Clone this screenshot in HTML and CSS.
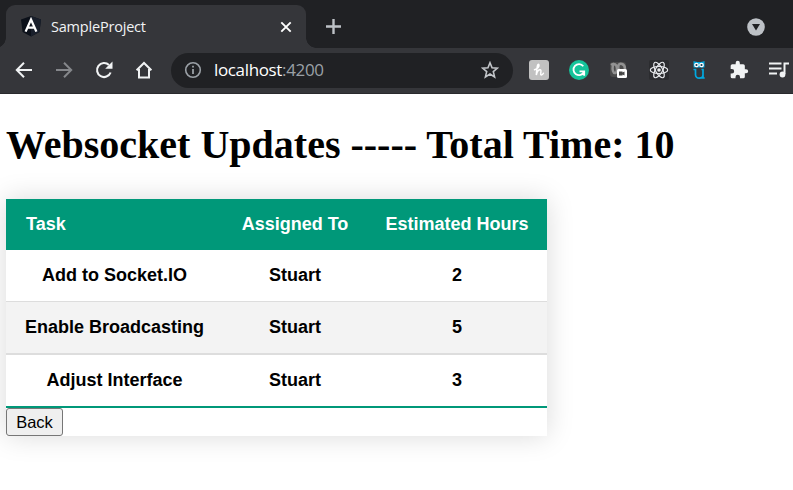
FILE: index.html
```html
<!DOCTYPE html>
<html lang="en">
<head>
<meta charset="utf-8">
<title>SampleProject</title>
<link rel="stylesheet" href="styles.css">
</head>
<body>
<header class="browser">
  <div class="tabs">
    <div class="tab">
      <svg class="logo" width="20" height="21" viewBox="0 0 20 21"><path fill="#0b1019" d="M10 0 20 3.4 18.4 16 10 20.6 1.6 16 0 3.4z"/><path fill="#191f2b" d="M10 0 20 3.4 18.4 16 10 20.6z"/><path fill="none" stroke="#fff" stroke-width="2.3" d="M4.6 15.6 10 3.5l5.4 12.1M7 11.6h6"/></svg>
      <span class="tab-title">SampleProject</span>
      <svg class="close" width="12" height="12" viewBox="0 0 12 12"><path stroke="#fff" stroke-width="1.9" d="m1.3 1.3 9.4 9.4m0-9.4-9.4 9.4"/></svg>
    </div>
    <svg class="plus" width="15" height="15" viewBox="0 0 15 15"><path stroke="#bdc1c6" stroke-width="2.4" d="M7.5 0v15M0 7.500h15"/></svg>
    <svg class="drop" width="18" height="18" viewBox="0 0 18 18"><circle cx="9" cy="9" r="8.8" fill="#bdc1c6"/><path fill="#202124" d="M5 6h8l-4 6.6z"/></svg>
  </div>
  <div class="toolbar">
    <svg class="nav" width="18" height="18" viewBox="0 0 18 18"><path fill="none" stroke="#f1f3f4" stroke-width="2" d="M17 9H2m7-7.2L1.8 9 9 16.2"/></svg>
    <svg class="nav" width="18" height="18" viewBox="0 0 18 18"><path fill="none" stroke="#85878b" stroke-width="2" d="M1 9h15M9 1.8 16.200 9 9 16.200"/></svg>
    <svg class="nav" width="18" height="18" viewBox="0 0 18 18"><path fill="none" stroke="#f1f3f4" stroke-width="2.100" d="M15.600 11.500A7 7 0 1 1 14 4.100"/><path fill="#f1f3f4" d="M17.500.5v7.300h-7.300z"/></svg>
    <svg class="nav" width="18" height="18" viewBox="0 0 18 18"><path fill="none" stroke="#f1f3f4" stroke-width="2" d="M1.600 9.300 9 2l7.400 7.300M4 8v8.500h10V8"/></svg>
    <div class="address">
      <svg width="18" height="18" viewBox="0 0 18 18"><circle cx="9" cy="9" r="7.300" fill="none" stroke="#9aa0a6" stroke-width="1.600"/><path stroke="#9aa0a6" stroke-width="1.800" d="M9 8v5M9 4.800v1.800"/></svg>
      <span class="url">localhost<span class="port">:4200</span></span>
      <svg class="star" width="18" height="18" viewBox="0 0 18 18"><path fill="none" stroke="#c2c5c9" stroke-width="1.600" d="m9 1.700 2.050 5 5.400.4-4.150 3.500 1.300 5.300L9 13l-4.600 2.900 1.300-5.300L1.550 7.100l5.400-.4z"/></svg>
    </div>
    <div class="extensions">
      <svg width="20" height="20" viewBox="0 0 20 20"><rect width="20" height="20" rx="3" fill="#c1c1c1"/><path fill="none" stroke="#fff" stroke-width="1.500" stroke-linecap="round" d="M5.500 9.800C8.500 9 10.800 6.300 9.800 4.500 8.800 3.300 7.800 7 7.300 15c.8-4 3-6 4.300-5.100 1.300 1-1 4.600.6 5 1 .1 1.800-.8 2.200-1.700"/></svg>
      <svg width="20" height="20" viewBox="0 0 20 20"><circle cx="10" cy="10" r="10" fill="#15c39a"/><path fill="none" stroke="#fff" stroke-width="1.800" d="M14.300 6.200A5.500 5.500 0 1 0 15 12M10.500 11.300h4.700v4.500"/></svg>
      <svg width="20" height="20" viewBox="0 0 20 20"><rect x="1" y="2" width="16" height="15" rx="3" fill="#4b4b4b"/><path fill="none" stroke="#929292" stroke-width="2.500" d="M2 5c3-2 6-1 6 4s-3 5-4 2 0-7 1-7M10 11C8 5 10 3 13 4s3 4 3 5"/><rect x="8" y="9" width="10" height="9" rx="1.500" fill="#fff"/><path fill="#444" d="M10 11.500h3.500v1l2-1v4l-2-1v1H10z"/></svg>
      <svg width="20" height="20" viewBox="0 0 20 20"><rect width="20" height="20" rx="2" fill="#2b2c2f"/><g fill="none" stroke="#e8eaed" stroke-width="1.200"><ellipse cx="10" cy="10" rx="8.700" ry="3.500"/><ellipse cx="10" cy="10" rx="8.700" ry="3.500" transform="rotate(60 10 10)"/><ellipse cx="10" cy="10" rx="8.700" ry="3.500" transform="rotate(120 10 10)"/></g><circle cx="10" cy="10" r="1.800" fill="#e8eaed"/></svg>
      <svg width="20" height="20" viewBox="0 0 20 20"><path fill="#00a8df" d="M4.500 1c2 .9 3.300.9 5.500.9s3.500 0 5.500-.9v6.500h-11z"/><g fill="#153b51" stroke="#fff" stroke-width="1.300"><circle cx="7.500" cy="5" r="1.700"/><circle cx="12.500" cy="5" r="1.700"/></g><path fill="none" stroke="#00a8df" stroke-width="1.700" d="M4.500 9.500h2v5.300c0 4.600 7.500 4.400 7.500 0V9.500M12.500 9.500H14V18h1.700"/></svg>
      <svg width="20" height="20" viewBox="0 0 24 24"><path fill="#f1f3f4" d="M20.500 11H19V7a2 2 0 0 0-2-2h-4V3.500a2.500 2.500 0 0 0-5 0V5H4a2 2 0 0 0-2 2v3.800h1.500a2.700 2.700 0 0 1 0 5.400H2V20a2 2 0 0 0 2 2h3.800v-1.500a2.700 2.700 0 0 1 5.400 0V22H17a2 2 0 0 0 2-2v-4h1.500a2.500 2.500 0 0 0 0-5z"/></svg>
      <svg width="20" height="20" viewBox="0 0 20 20"><path fill="none" stroke="#f1f3f4" stroke-width="2" d="M0 3.500h12.500M0 8.500h12.500M0 13.500h8M15.500 14V3.500H20"/><circle cx="13.500" cy="14.500" r="2.900" fill="#f1f3f4"/></svg>
    </div>
  </div>
</header>
<main>
  <h1>Websocket Updates ----- Total Time: 10</h1>
  <div class="card">
    <table>
      <colgroup><col class="task"><col class="person"><col class="hours"></colgroup>
      <thead><tr><th class="first">Task</th><th>Assigned To</th><th>Estimated Hours</th></tr></thead>
      <tbody>
        <tr><th>Add to Socket.IO</th><th>Stuart</th><th>2</th></tr>
        <tr class="even"><th>Enable Broadcasting</th><th>Stuart</th><th>5</th></tr>
        <tr class="last"><th>Adjust Interface</th><th>Stuart</th><th>3</th></tr>
      </tbody>
    </table>
    <button type="button">Back</button>
  </div>
</main>
</body>
</html>
```
FILE: styles.css
```css
* { box-sizing: border-box; }
body { margin: 0; height: 490px; overflow: hidden; background: #fff; color: #000; }
svg { display: block; flex: none; }
.browser { font-family: "Open Sans", "Noto Sans", sans-serif; background: #202124; }
.tabs { height: 48px; padding: 5px 28px 0 6px; display: flex; align-items: center; }
.tab {
  position: relative; width: 300px; height: 43px; padding: 0 14px 0 15px;
  display: flex; align-items: center; background: #35363a; border-radius: 9px 9px 0 0;
}
.tab::before, .tab::after { content: ""; position: absolute; bottom: 0; width: 10px; height: 10px; }
.tab::before { left: -10px; background: radial-gradient(circle at 0 0, transparent 9.5px, #35363a 10px); }
.tab::after { right: -10px; background: radial-gradient(circle at 100% 0, transparent 9.5px, #35363a 10px); }
.tab-title { margin-left: 10px; font-size: 14.5px; line-height: 20px; letter-spacing: -.2px; color: #f1f3f4; }
.close { margin-left: auto; }
.plus { margin-left: 20px; }
.drop { margin-left: auto; }
.toolbar {
  height: 46px; padding: 0 4px 1px 14.5px; display: flex; align-items: center;
  background: #35363a; border-bottom: 1px solid #292a2d;
}
.nav { margin-right: 22px; }
.address {
  width: 342px; height: 35px; margin-left: -3.5px; padding: 0 14px 0 13px;
  display: flex; align-items: center; border-radius: 18px; background: #202124;
}
.url { margin-left: 12px; font-size: 17px; line-height: 24px; letter-spacing: -.35px; color: #fff; }
.port { color: #9aa0a6; }
.star { margin-left: auto; }
.extensions { display: flex; gap: 20px; margin-left: 16.5px; }
main { padding: 0 6px; }
h1 { margin: 27px 0 30px; font: bold 40px/48px "Liberation Serif", serif; white-space: nowrap; }
.card { width: 541px; height: 237px; font-family: "Liberation Sans", sans-serif; box-shadow: 0 0 26px rgba(0, 0, 0, .15); }
table { width: 541px; table-layout: fixed; border-collapse: separate; border-spacing: 0; font-size: 18px; line-height: 20px; }
.task { width: 217px; }
.person { width: 144px; }
.hours { width: 180px; }
th { height: 52px; padding: 0 0 2px; font-weight: bold; border-bottom: 1px solid #ddd; white-space: nowrap; }
thead th { height: 51px; border: 0; color: #fff; background: #009879; }
thead .first { text-align: left; padding-left: 20px; }
.even th { height: 53px; background: #f3f3f3; border-bottom-width: 2px; }
.last th { height: 53px; border-bottom: 2px solid #009879; }
button {
  display: block; width: 57px; height: 28px; padding: 0; font: 16.5px/20px "Liberation Sans", sans-serif;
  color: #000; background: #efefef; border: 1px solid #767676; border-radius: 3px;
}
```
